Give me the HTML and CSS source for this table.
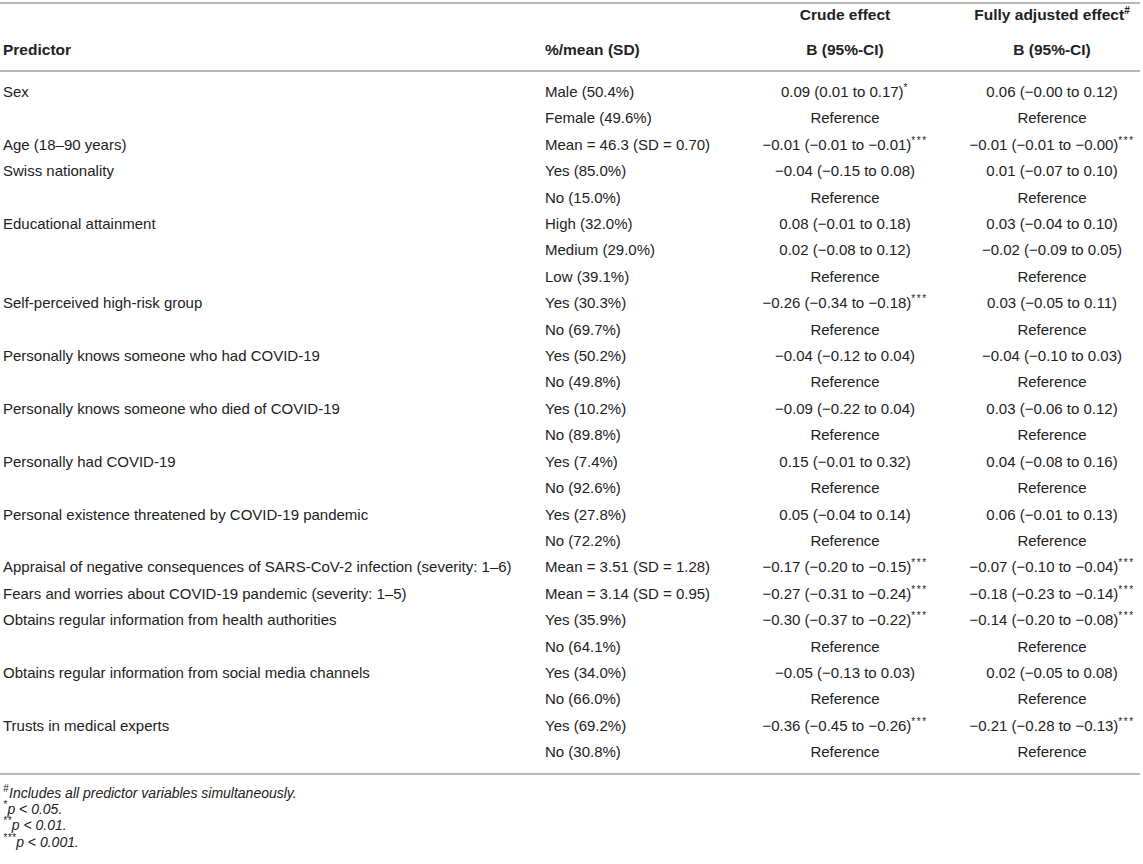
FILE: index.html
```html
<!DOCTYPE html>
<html lang="en">
<head>
<meta charset="utf-8">
<title>Predictors table</title>
<link rel="stylesheet" href="styles.css">
</head>
<body>
<div class="page">
<table class="results">
  <colgroup>
    <col class="c-pred">
    <col class="c-dist">
    <col class="c-crude">
    <col class="c-adj">
  </colgroup>
  <thead>
    <tr>
      <th class="pred">Predictor</th>
      <th class="dist">%/mean (SD)</th>
      <th class="eff"><span class="line">Crude effect</span><span class="line sub">B (95%-CI)</span></th>
      <th class="eff adj"><span class="line">Fully adjusted effect<sup class="hash">#</sup></span><span class="line sub">B (95%-CI)</span></th>
    </tr>
  </thead>
  <tbody>
    <tr class="first"><td class="pred">Sex</td><td class="dist">Male (50.4%)</td><td class="eff">0.09 (0.01 to 0.17)<sup>*</sup></td><td class="eff adj">0.06 (−0.00 to 0.12)</td></tr>
    <tr><td class="pred"></td><td class="dist">Female (49.6%)</td><td class="eff">Reference</td><td class="eff adj">Reference</td></tr>
    <tr><td class="pred">Age (18–90 years)</td><td class="dist">Mean = 46.3 (SD = 0.70)</td><td class="eff">−0.01 (−0.01 to −0.01)<sup>***</sup></td><td class="eff adj">−0.01 (−0.01 to −0.00)<sup>***</sup></td></tr>
    <tr><td class="pred">Swiss nationality</td><td class="dist">Yes (85.0%)</td><td class="eff">−0.04 (−0.15 to 0.08)</td><td class="eff adj">0.01 (−0.07 to 0.10)</td></tr>
    <tr><td class="pred"></td><td class="dist">No (15.0%)</td><td class="eff">Reference</td><td class="eff adj">Reference</td></tr>
    <tr><td class="pred">Educational attainment</td><td class="dist">High (32.0%)</td><td class="eff">0.08 (−0.01 to 0.18)</td><td class="eff adj">0.03 (−0.04 to 0.10)</td></tr>
    <tr><td class="pred"></td><td class="dist">Medium (29.0%)</td><td class="eff">0.02 (−0.08 to 0.12)</td><td class="eff adj">−0.02 (−0.09 to 0.05)</td></tr>
    <tr><td class="pred"></td><td class="dist">Low (39.1%)</td><td class="eff">Reference</td><td class="eff adj">Reference</td></tr>
    <tr><td class="pred">Self-perceived high-risk group</td><td class="dist">Yes (30.3%)</td><td class="eff">−0.26 (−0.34 to −0.18)<sup>***</sup></td><td class="eff adj">0.03 (−0.05 to 0.11)</td></tr>
    <tr><td class="pred"></td><td class="dist">No (69.7%)</td><td class="eff">Reference</td><td class="eff adj">Reference</td></tr>
    <tr><td class="pred">Personally knows someone who had COVID-19</td><td class="dist">Yes (50.2%)</td><td class="eff">−0.04 (−0.12 to 0.04)</td><td class="eff adj">−0.04 (−0.10 to 0.03)</td></tr>
    <tr><td class="pred"></td><td class="dist">No (49.8%)</td><td class="eff">Reference</td><td class="eff adj">Reference</td></tr>
    <tr><td class="pred">Personally knows someone who died of COVID-19</td><td class="dist">Yes (10.2%)</td><td class="eff">−0.09 (−0.22 to 0.04)</td><td class="eff adj">0.03 (−0.06 to 0.12)</td></tr>
    <tr><td class="pred"></td><td class="dist">No (89.8%)</td><td class="eff">Reference</td><td class="eff adj">Reference</td></tr>
    <tr><td class="pred">Personally had COVID-19</td><td class="dist">Yes (7.4%)</td><td class="eff">0.15 (−0.01 to 0.32)</td><td class="eff adj">0.04 (−0.08 to 0.16)</td></tr>
    <tr><td class="pred"></td><td class="dist">No (92.6%)</td><td class="eff">Reference</td><td class="eff adj">Reference</td></tr>
    <tr><td class="pred">Personal existence threatened by COVID-19 pandemic</td><td class="dist">Yes (27.8%)</td><td class="eff">0.05 (−0.04 to 0.14)</td><td class="eff adj">0.06 (−0.01 to 0.13)</td></tr>
    <tr><td class="pred"></td><td class="dist">No (72.2%)</td><td class="eff">Reference</td><td class="eff adj">Reference</td></tr>
    <tr><td class="pred">Appraisal of negative consequences of SARS-CoV-2 infection (severity: 1–6)</td><td class="dist">Mean = 3.51 (SD = 1.28)</td><td class="eff">−0.17 (−0.20 to −0.15)<sup>***</sup></td><td class="eff adj">−0.07 (−0.10 to −0.04)<sup>***</sup></td></tr>
    <tr><td class="pred">Fears and worries about COVID-19 pandemic (severity: 1–5)</td><td class="dist">Mean = 3.14 (SD = 0.95)</td><td class="eff">−0.27 (−0.31 to −0.24)<sup>***</sup></td><td class="eff adj">−0.18 (−0.23 to −0.14)<sup>***</sup></td></tr>
    <tr><td class="pred">Obtains regular information from health authorities</td><td class="dist">Yes (35.9%)</td><td class="eff">−0.30 (−0.37 to −0.22)<sup>***</sup></td><td class="eff adj">−0.14 (−0.20 to −0.08)<sup>***</sup></td></tr>
    <tr><td class="pred"></td><td class="dist">No (64.1%)</td><td class="eff">Reference</td><td class="eff adj">Reference</td></tr>
    <tr><td class="pred">Obtains regular information from social media channels</td><td class="dist">Yes (34.0%)</td><td class="eff">−0.05 (−0.13 to 0.03)</td><td class="eff adj">0.02 (−0.05 to 0.08)</td></tr>
    <tr><td class="pred"></td><td class="dist">No (66.0%)</td><td class="eff">Reference</td><td class="eff adj">Reference</td></tr>
    <tr><td class="pred">Trusts in medical experts</td><td class="dist">Yes (69.2%)</td><td class="eff">−0.36 (−0.45 to −0.26)<sup>***</sup></td><td class="eff adj">−0.21 (−0.28 to −0.13)<sup>***</sup></td></tr>
    <tr class="last"><td class="pred"></td><td class="dist">No (30.8%)</td><td class="eff">Reference</td><td class="eff adj">Reference</td></tr>
  </tbody>
</table>
<div class="notes">
  <p><sup class="hash">#</sup>Includes all predictor variables simultaneously.</p>
  <p><sup>*</sup>p &lt; 0.05.</p>
  <p><sup>**</sup>p &lt; 0.01.</p>
  <p><sup>***</sup>p &lt; 0.001.</p>
</div>
</div>
</body>
</html>
```

FILE: styles.css
```css
html, body {
  margin: 0;
  padding: 0;
  background: #ffffff;
}

.page {
  padding-top: 2px;
  font-family: "Liberation Sans", Arial, Helvetica, sans-serif;
  font-size: 15px;
  color: #222222;
}

.results {
  width: 1140px;
  border-collapse: collapse;
  table-layout: fixed;
  border-top: 2px solid #b8b8b8;
  border-bottom: 2px solid #b8b8b8;
}

.c-pred { width: 540px; }
.c-dist { width: 205px; }
.c-crude { width: 200px; }
.c-adj { width: 195px; }

.results thead tr {
  border-bottom: 2px solid #b8b8b8;
}

.results th {
  font-size: 15.5px;
  font-weight: bold;
  line-height: 20px;
  padding: 1px 0 10px;
  vertical-align: bottom;
  text-align: left;
  white-space: nowrap;
}

.results th .line {
  display: block;
}

.results th .sub {
  margin-top: 15px;
}

.results td {
  line-height: 26.4px;
  padding: 0;
  vertical-align: top;
  white-space: nowrap;
}

.results .pred {
  padding-left: 3px;
}

.results .dist {
  padding-left: 5px;
}

.results .eff {
  text-align: center;
}

.results .eff.adj {
  padding-left: 19px;
}

.results tr.first td {
  padding-top: 7px;
}

.results tr.last td {
  padding-bottom: 7px;
}

sup {
  font-size: 10px;
  letter-spacing: 1.5px;
  line-height: 0;
  vertical-align: 6px;
}

sup.hash {
  font-size: 10px;
  letter-spacing: 0;
}

.notes {
  margin-top: 10px;
  padding-left: 3px;
  font-size: 14px;
  font-style: italic;
}

.notes p {
  margin: 0;
  line-height: 16.4px;
}

.notes sup {
  letter-spacing: 0.5px;
}
```
